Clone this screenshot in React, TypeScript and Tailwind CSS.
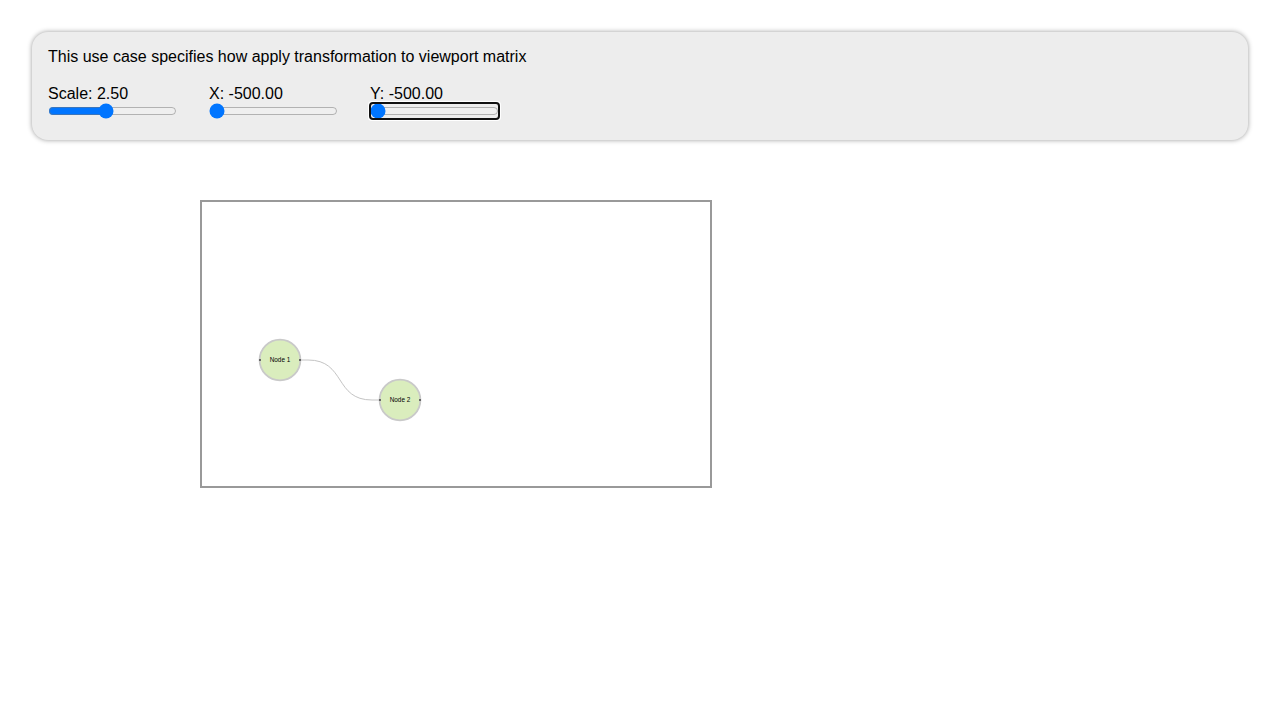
import { useEffect, useRef, useState } from "react";

type RangeProps = { label: string; initial: number; min: number; max: number; focused?: boolean };

function Range({ label, initial, min, max, focused }: RangeProps) {
  const [value, setValue] = useState(initial);
  const ref = useRef<HTMLInputElement>(null);
  useEffect(() => {
    if (focused) ref.current?.focus();
  }, [focused]);
  return (
    <label className="flex w-[129px] flex-col">
      <span className="h-[18px] leading-[18px] whitespace-nowrap">
        {label}: {value.toFixed(2)}
      </span>
      <input
        ref={ref}
        type="range"
        min={min}
        max={max}
        step="any"
        value={value}
        onChange={(e) => setValue(Number(e.target.value))}
        className="h-4 w-[129px]"
      />
    </label>
  );
}

function GraphNode({ x, y, title }: { x: number; y: number; title: string }) {
  return (
    <g transform={`translate(${x} ${y})`}>
      <circle r="20.4" fill="#daedbd" stroke="#c9c9c9" strokeWidth="1.8" />
      <text y="2" textAnchor="middle" className="fill-black text-[6.4px]">
        {title}
      </text>
      <rect x="-21" y="-1" width="2" height="2" fill="#666" />
      <rect x="19" y="-1" width="2" height="2" fill="#666" />
    </g>
  );
}

export default function App() {
  return (
    <main className="h-[720px] overflow-hidden bg-white px-8 pt-8 font-['Liberation_Sans',Arial,sans-serif] text-base text-black">
      <section className="h-[108px] rounded-2xl bg-[#ededed] px-4 pt-4 shadow-[0_0_5px_#999]">
        <p className="leading-[18px]">This use case specifies how apply transformation to viewport matrix</p>
        <div className="mt-[19px] flex gap-8">
          <Range label="Scale" initial={2.5} min={0.2} max={5.35} />
          <Range label="X" initial={-500} min={-500} max={500} />
          <Range label="Y" initial={-500} min={-500} max={500} focused />
        </div>
      </section>
      <div className="mt-[60px] ml-[168px] h-72 w-[512px] border-2 border-[#999]">
        <svg viewBox="202 202 508 284" className="block h-full w-full">
          <path d="M300 360H308C346 360 334 400 372 400H380" fill="none" stroke="#c4c4c4" />
          <GraphNode x={280} y={360} title="Node 1" />
          <GraphNode x={400} y={400} title="Node 2" />
        </svg>
      </div>
    </main>
  );
}
